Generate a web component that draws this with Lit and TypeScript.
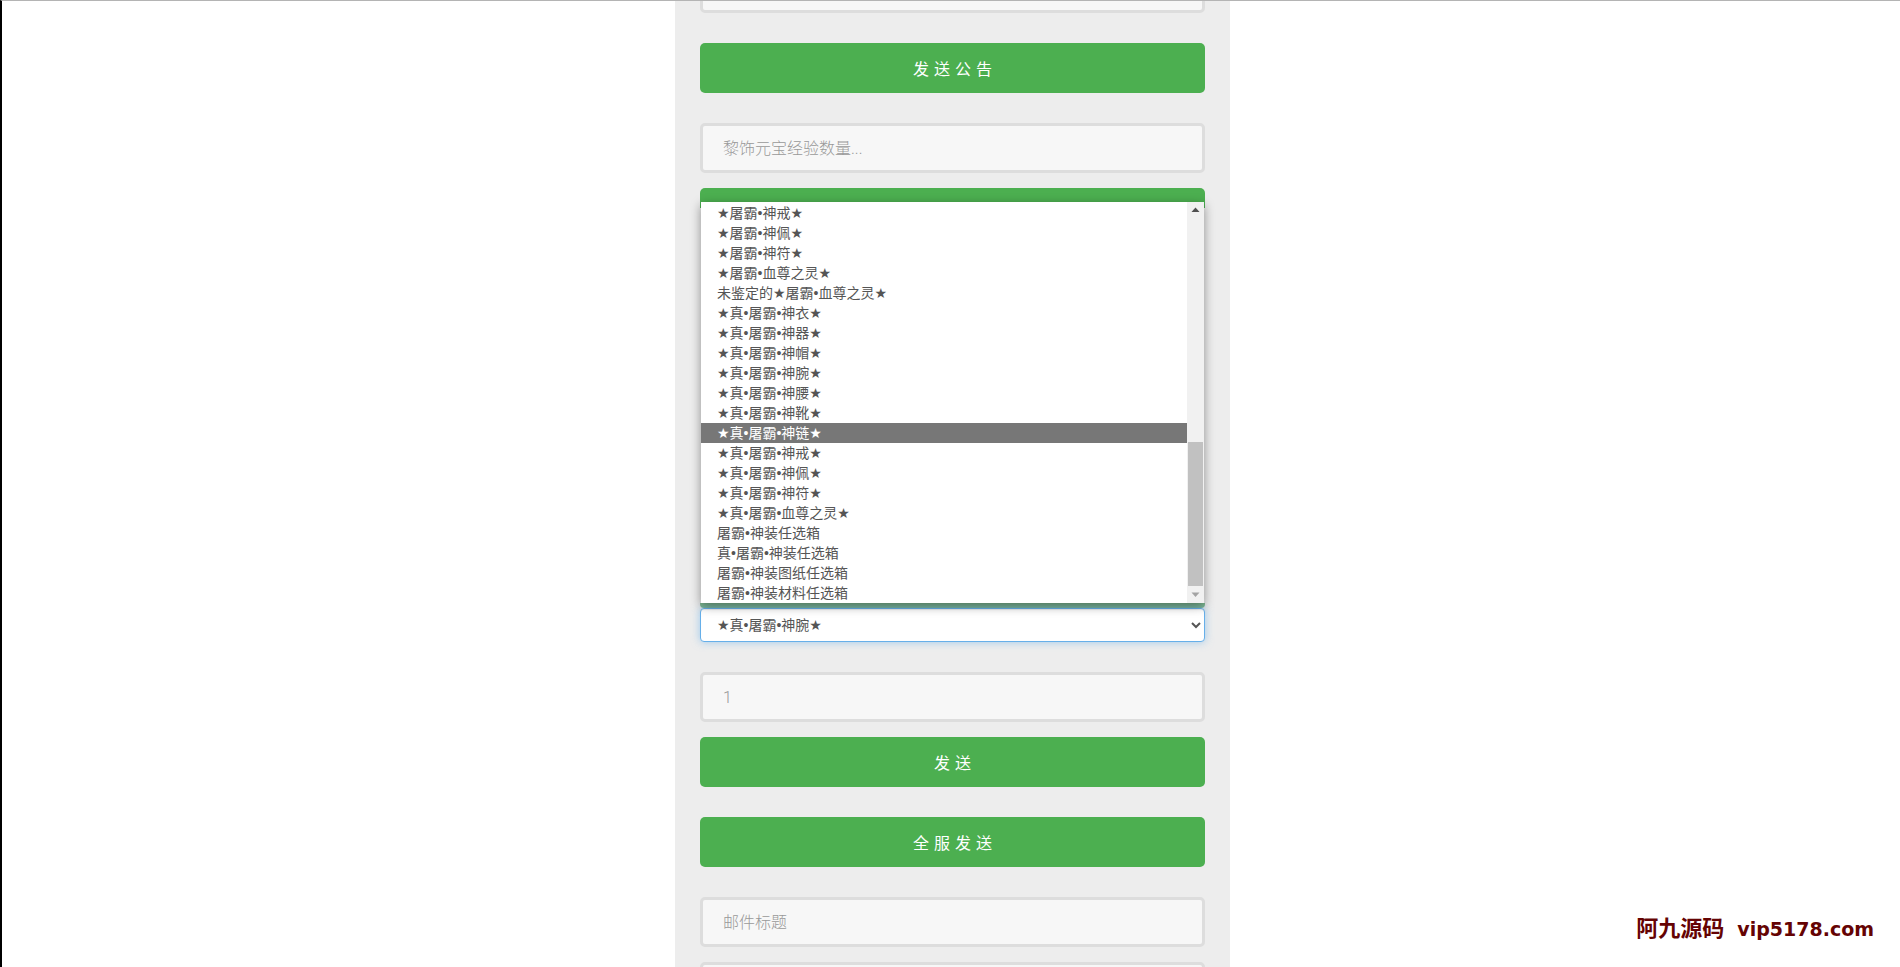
import { LitElement, html, css } from "lit";
import { customElement } from "lit/decorators.js";

const ITEMS = [
  "★屠霸•神戒★", "★屠霸•神佩★", "★屠霸•神符★", "★屠霸•血尊之灵★", "未鉴定的★屠霸•血尊之灵★",
  "★真•屠霸•神衣★", "★真•屠霸•神器★", "★真•屠霸•神帽★", "★真•屠霸•神腕★", "★真•屠霸•神腰★",
  "★真•屠霸•神靴★", "★真•屠霸•神链★", "★真•屠霸•神戒★", "★真•屠霸•神佩★", "★真•屠霸•神符★",
  "★真•屠霸•血尊之灵★", "屠霸•神装任选箱", "真•屠霸•神装任选箱", "屠霸•神装图纸任选箱", "屠霸•神装材料任选箱",
];
const ACTIVE = 11;

@customElement("app-root")
export class AppRoot extends LitElement {
  static styles = css`
    :host {
      display: block;
      position: relative;
      height: 967px;
      box-sizing: border-box;
      overflow: hidden;
      background: #fff;
      border-top: 1px solid #b4b4b4;
      border-left: 2px solid #000;
      padding-left: 673px;
      font-family: "Liberation Sans", "DejaVu Sans", "Noto Sans CJK SC", sans-serif;
    }
    .panel {
      width: 555px;
      height: 966px;
      box-sizing: border-box;
      background: #ededed;
      padding: 0 25px;
      display: flex;
      flex-direction: column;
    }
    .field {
      flex: none;
      display: block;
      width: 100%;
      height: 50px;
      box-sizing: border-box;
      border: 3px solid #ddd;
      border-radius: 5px;
      background: #f7f7f7;
      padding: 1px 20px 0;
      font-family: Roboto, "Noto Sans CJK SC", sans-serif;
      font-weight: 300;
      font-size: 16px;
      color: #555;
      outline: none;
    }
    .field::placeholder { color: #999; opacity: 1; }
    .btn {
      flex: none;
      height: 50px;
      box-sizing: border-box;
      padding-left: 5px;
      border-radius: 5px;
      background: #4caf50;
      color: #fff;
      font-size: 16px;
      letter-spacing: 5px;
      display: flex;
      align-items: center;
      justify-content: center;
    }
    .peek-top {
      flex: none;
      height: 20px;
      margin-bottom: 395px;
      border-radius: 5px 5px 0 0;
      background: #4caf50;
    }
    .peek-bottom {
      flex: none;
      height: 5px;
      border-radius: 0 0 4px 4px;
      background: #7fb98d;
    }
    .first { margin-top: -38px; }
    .gap-l { margin-bottom: 30px; }
    .gap-s { margin-bottom: 15px; }
    .select-wrap { flex: none; position: relative; margin-bottom: 30px; }
    select {
      display: block;
      width: 100%;
      height: 34px;
      box-sizing: border-box;
      padding: 6px 12px;
      background: #fff;
      border: 1px solid #66afe9;
      border-radius: 4px;
      color: #555;
      font: inherit;
      font-size: 14px;
      outline: none;
      box-shadow: inset 0 1px 1px rgba(0,0,0,.075), 0 0 8px rgba(102,175,233,.6);
    }
    .popup {
      position: absolute;
      left: 1px;
      right: 1px;
      bottom: calc(100% + 5px);
      height: 401px;
      background: #fff;
      box-shadow: 0 3px 10px rgba(0,0,0,.4);
      display: flex;
      overflow: hidden;
    }
    .list { flex: 1; min-width: 0; padding-top: 1px; }
    .opt {
      height: 20px;
      line-height: 20px;
      padding-left: 16px;
      font-size: 14px;
      color: #555;
      white-space: nowrap;
    }
    .opt.on { background: #777; color: #fff; }
    .bar {
      flex: none;
      width: 17px;
      background: #f1f1f1;
      display: flex;
      flex-direction: column;
      align-items: center;
      box-sizing: border-box;
    }
    .arrow { flex: none; height: 17px; width: 17px; display: block; }
    .thumb { flex: none; width: 15px; height: 144px; margin-top: 223px; background: #c1c1c1; }
    .spacer { flex: 1; }
    .mark {
      position: absolute;
      right: 26px;
      top: 914px;
      color: #650303;
      font-weight: 700;
      font-size: 19px;
      line-height: 28px;
      white-space: nowrap;
      font-family: "DejaVu Sans", "Noto Sans CJK SC", sans-serif;
    }
    .mark .han { font-size: 22px; margin-right: 13px; }
  `;

  render() {
    return html`
      <div class="panel">
        <input class="field first gap-l" />
        <div class="btn gap-l">发送公告</div>
        <input class="field gap-s" placeholder="黎饰元宝经验数量..." />
        <div class="peek-top"></div>
        <div class="peek-bottom"></div>
        <div class="select-wrap">
          <select><option>★真•屠霸•神腕★</option></select>
          <div class="popup">
            <div class="list">
              ${ITEMS.map((t, i) => html`<div class="opt ${i === ACTIVE ? "on" : ""}">${t}</div>`)}
            </div>
            <div class="bar">
              <svg class="arrow" viewBox="0 0 17 17"><path d="M8.5 5.5L12.5 10H4.5Z" fill="#505050"/></svg>
              <div class="thumb"></div>
              <div class="spacer"></div>
              <svg class="arrow" viewBox="0 0 17 17"><path d="M8.5 11L12.5 6.5H4.5Z" fill="#a3a3a3"/></svg>
            </div>
          </div>
        </div>
        <input class="field gap-s" placeholder="1" />
        <div class="btn gap-l">发送</div>
        <div class="btn gap-l">全服发送</div>
        <input class="field gap-s" placeholder="邮件标题" />
        <input class="field" />
      </div>
      <div class="mark"><span class="han">阿九源码</span>vip5178.com</div>
    `;
  }
}
